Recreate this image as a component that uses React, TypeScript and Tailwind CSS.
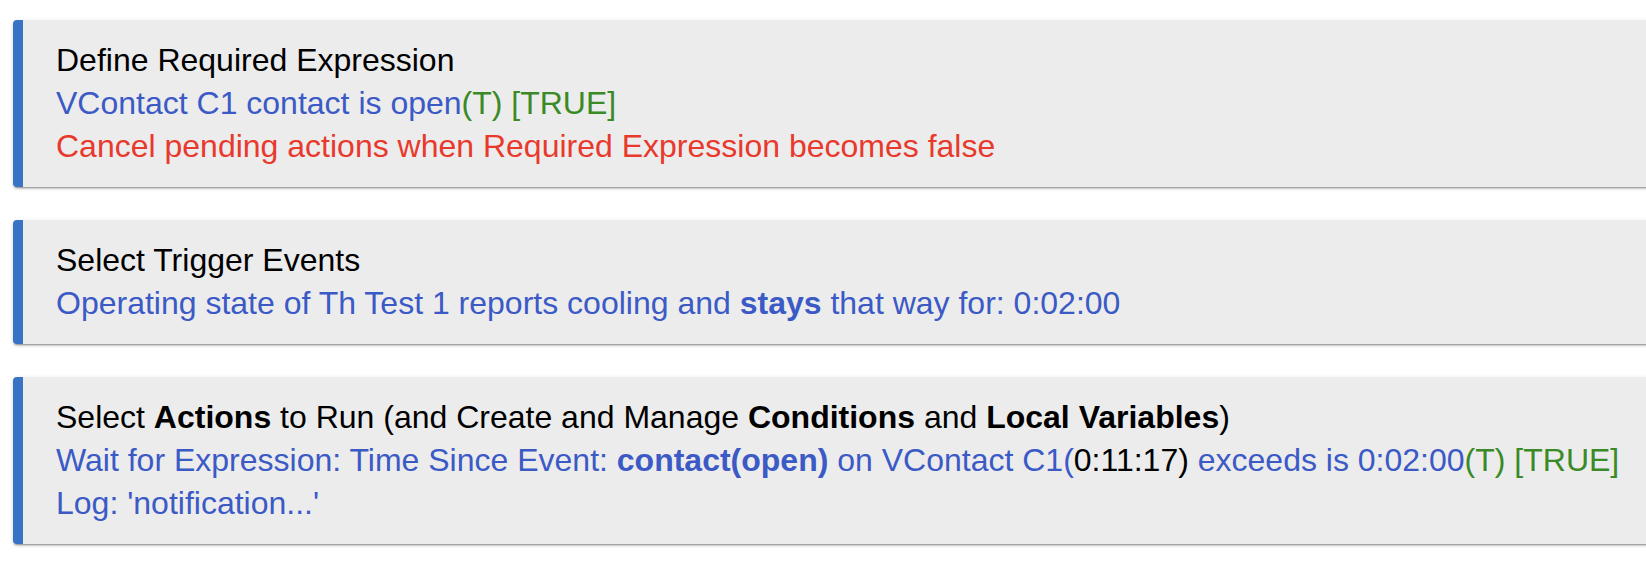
import React from "react"

const blue = "text-[#3b5ac6]"
const green = "text-[#3a8a26]"

function Card({ children }: { children: React.ReactNode }) {
  return (
    <div className="-mr-8 rounded-[4px] border-l-[10px] border-[#3a73c5] bg-[#ececec] py-[19px] pl-[33px] shadow-[0_2px_2px_0_rgba(0,0,0,0.16),0_3px_1px_-2px_rgba(0,0,0,0.22),0_1px_5px_0_rgba(0,0,0,0.1)]">
      {children}
    </div>
  )
}

export default function App() {
  return (
    <div
      className="min-h-screen overflow-hidden bg-white pt-[20px] pl-[13px] text-[32px] leading-[43px] text-black"
      style={{ fontFamily: '"Liberation Sans", Arial, Helvetica, sans-serif' }}
    >
      <div className="flex flex-col gap-[33px]">
        {/* Required expression */}
        <Card>
          <div>Define Required Expression</div>
          <div>
            <span className={blue}>VContact C1 contact is open</span>
            <span className={green}>(T) [TRUE]</span>
          </div>
          <div className="text-[#e8392c]">Cancel pending actions when Required Expression becomes false</div>
        </Card>

        {/* Triggers */}
        <Card>
          <div>Select Trigger Events</div>
          <div className={blue}>
            Operating state of Th Test 1 reports cooling and <b>stays</b> that way for: 0:02:00
          </div>
        </Card>

        {/* Actions */}
        <Card>
          <div>
            Select <b>Actions</b> to Run (and Create and Manage <b>Conditions</b> and <b>Local Variables</b>)
          </div>
          <div className="whitespace-nowrap">
            <span className={blue}>
              Wait for Expression: Time Since Event: <b>contact(open)</b> on VContact C1(
            </span>
            <span>0:11:17)</span>
            <span className={blue}> exceeds is 0:02:00</span>
            <span className={green}>(T) [TRUE]</span>
          </div>
          <div className={blue}>Log: 'notification...'</div>
        </Card>
      </div>
    </div>
  )
}
